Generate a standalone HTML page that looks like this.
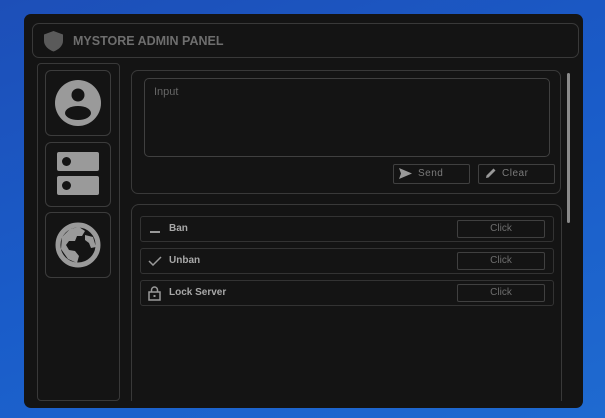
<!DOCTYPE html>
<html><head><style>
*{margin:0;padding:0;box-sizing:border-box}
body{width:605px;height:418px;overflow:hidden;background:linear-gradient(160deg,#1d4fb8 0%,#1a5cc9 50%,#1f6ad0 100%);font-family:"Liberation Sans",sans-serif;position:relative}
.a{position:absolute}
.panel{left:24px;top:14px;width:559px;height:394px;background:#141414;border-radius:7px}
.title{left:32px;top:23px;width:547px;height:35px;border-radius:7px;border:1px solid #393939}
.tt{left:73px;top:34px;color:#6e6e6e;font-weight:bold;font-size:12.5px;letter-spacing:0}
.side{left:37px;top:63px;width:83px;height:338px;border-radius:4px;border:1px solid #393939}
.sb{left:45px;width:66px;height:66px;border-radius:6px;border:1px solid #3c3c3c}
.sec{border:1px solid #393939;border-radius:7px}
.btn{border:1px solid #404040;border-radius:2px;color:#777;font-size:10px}
.row{left:140px;width:414px;height:26px;border:1px solid #333;border-radius:3px}
.rl{position:absolute;left:28px;top:6px;color:#a8a8a8;font-size:10px;font-weight:bold}
.ck{position:absolute;left:316px;top:3px;width:88px;height:18px;border:1px solid #404040;border-radius:2px;color:#6e6e6e;font-size:10px;text-align:center;line-height:16px}
</style></head><body>
<div class="a panel"></div>
<div class="a title"></div>
<svg class="a" style="left:43px;top:30px" width="21" height="22" viewBox="0 0 21 22"><path d="M10.5 1 L20 4.5 V11 C20 16 15 20 10.5 21.5 C6 20 1 16 1 11 V4.5 Z" fill="#5a5a5a"/></svg>
<div class="a tt">MYSTORE ADMIN PANEL</div>
<div class="a side"></div>
<div class="a sb" style="top:70px"></div>
<svg class="a" style="left:54px;top:79px" width="48" height="48" viewBox="0 0 48 48"><circle cx="24" cy="24" r="23" fill="#9a9a9a"/><circle cx="24" cy="16" r="6.5" fill="#141414"/><ellipse cx="24" cy="34" rx="13" ry="7" fill="#141414"/></svg>
<div class="a sb" style="top:142px;height:65px"></div>
<div class="a" style="left:57px;top:152px;width:42px;height:19px;background:#9a9a9a;border-radius:2px"></div>
<div class="a" style="left:57px;top:176px;width:42px;height:19px;background:#9a9a9a;border-radius:2px"></div>
<div class="a" style="left:62px;top:157px;width:9px;height:9px;background:#141414;border-radius:50%"></div>
<div class="a" style="left:62px;top:181px;width:9px;height:9px;background:#141414;border-radius:50%"></div>
<div class="a sb" style="top:212px"></div>
<svg class="a" style="left:55px;top:221px" width="46" height="48" viewBox="0 0 46 48"><circle cx="23" cy="24" r="20" fill="none" stroke="#9a9a9a" stroke-width="5"/><path d="M15 8 L24 6 L30 10 L27 15 L22 15 L20 20 L14 20 L11 24 L14 29 L20 30 L24 35 L22 42 L13 38 L6 28 L7 16 Z" fill="#9a9a9a"/><path d="M30 14 L38 16 L41 26 L36 27 L34 22 L30 19 Z" fill="#9a9a9a"/></svg>
<div class="a sec" style="left:131px;top:70px;width:430px;height:124px"></div>
<div class="a" style="left:144px;top:78px;width:406px;height:79px;border:1px solid #404040;border-radius:5px"></div>
<div class="a" style="left:154px;top:86px;color:#666;font-size:11px">Input</div>
<div class="a btn" style="left:393px;top:164px;width:77px;height:20px"></div>
<svg class="a" style="left:399px;top:168px" width="13" height="11" viewBox="0 0 13 11"><path d="M0 0 L13 5.5 L0 11 L2 5.5 Z" fill="#999"/></svg>
<div class="a" style="left:418px;top:168px;color:#7a7a7a;font-size:10px;letter-spacing:0.5px">Send</div>
<div class="a btn" style="left:478px;top:164px;width:77px;height:20px"></div>
<svg class="a" style="left:485px;top:167px" width="12" height="12" viewBox="0 0 12 12"><path d="M1 11 L1.5 8.5 L8.5 1.5 L10.5 3.5 L3.5 10.5 Z" fill="#999"/></svg>
<div class="a" style="left:502px;top:168px;color:#7a7a7a;font-size:10px;letter-spacing:0.5px">Clear</div>
<div class="a" style="left:567px;top:73px;width:3px;height:150px;background:#8a8a8a;border-radius:2px"></div>
<div class="a" style="left:131px;top:204px;width:431px;height:197px;border:1px solid #393939;border-bottom:none;border-radius:8px 8px 0 0"></div>
<div class="a row" style="top:216px"><div class="a" style="left:9px;top:14px;width:10px;height:1.5px;background:#999"></div><div class="rl">Ban</div><div class="ck">Click</div></div>
<div class="a row" style="top:248px"><svg class="a" style="left:7px;top:7px" width="14" height="10" viewBox="0 0 14 10"><path d="M1 5 L5 9 L13 1" fill="none" stroke="#999" stroke-width="1.5"/></svg><div class="rl">Unban</div><div class="ck">Click</div></div>
<div class="a row" style="top:280px"><svg class="a" style="left:7px;top:5px" width="13" height="15" viewBox="0 0 13 15"><path d="M3.5 6 V4 A3 3 0 0 1 9.5 4 V6" fill="none" stroke="#999" stroke-width="1.5"/><rect x="1" y="6" width="11" height="8" fill="none" stroke="#999" stroke-width="1.5"/><rect x="5.5" y="9" width="2" height="2" fill="#999"/></svg><div class="rl">Lock Server</div><div class="ck">Click</div></div>
</body></html>
